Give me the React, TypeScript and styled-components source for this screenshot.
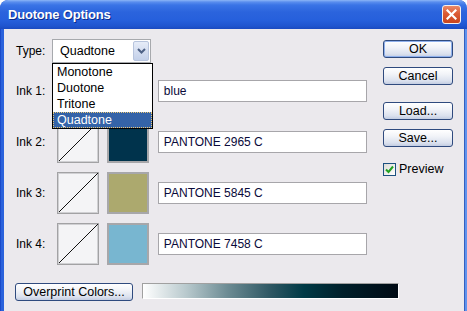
import React from "react";
import styled, { createGlobalStyle } from "styled-components";

const GlobalStyle = createGlobalStyle`
  html, body {
    margin: 0;
    padding: 0;
    background: #ffffff;
  }
  body {
    font-family: "Liberation Sans", Arial, sans-serif;
    font-size: 12px;
    color: #000;
  }
`;

const Window = styled.div`
  width: 467px;
  height: 311px;
  overflow: hidden;
  display: flex;
  flex-direction: column;
  border-radius: 8px 8px 0 0;
  background: linear-gradient(to right, #0b33b8 0px, #2a62dc 1px, #2a62dc 3px, #2a62dc 463px, #0c2a8c 464px, #5f93ee 465px);
`;

const TitleBar = styled.div`
  height: 29px;
  flex: none;
  display: flex;
  align-items: center;
  justify-content: space-between;
  padding: 0 6px 0 8px;
  border-radius: 8px 8px 0 0;
  background: linear-gradient(
    to bottom,
    #8cb6f7 0px,
    #5a8eee 2px,
    #3a74e6 5px,
    #2b64dd 12px,
    #2660dc 20px,
    #1f55cf 26px,
    #1a4ac0 29px
  );
`;

const Title = styled.span`
  color: #fff;
  font-weight: bold;
  font-size: 13px;
  letter-spacing: -0.2px;
  text-shadow: 1px 1px 0 #0b2a8a;
  margin-top: -1px;
`;

const CloseButton = styled.div`
  width: 17px;
  height: 17px;
  border: 1px solid #f4f1ee;
  border-radius: 3px;
  display: flex;
  align-items: center;
  justify-content: center;
  background: linear-gradient(to bottom, #e98a6a 0%, #dc5a33 45%, #c8451d 100%);
  margin-top: 0px;
`;

const Client = styled.div`
  flex: 1;
  margin: 0 3px 0 4px;
  background: #ebe9ed;
  display: flex;
  flex-direction: column;
  padding: 10px 0 0 11px;
`;

const TopSection = styled.div`
  display: flex;
`;

const LeftCol = styled.div`
  width: 352px;
  display: flex;
  flex-direction: column;
`;

const RightCol = styled.div`
  margin-left: 16px;
  padding-top: 1px;
  display: flex;
  flex-direction: column;
`;

const TypeRow = styled.div`
  height: 24px;
  display: flex;
  align-items: center;
`;

const Label = styled.span<{ $w: number }>`
  width: ${(p) => p.$w}px;
  flex: none;
  padding-left: 1px;
  color: #000;
`;

const SelectWrap = styled.div`
  position: relative;
  width: 99px;
  height: 24px;
`;

const SelectBox = styled.div`
  box-sizing: border-box;
  width: 99px;
  height: 24px;
  border: 1px solid #a7a9ad;
  background: #fff;
  display: flex;
  align-items: center;
  justify-content: space-between;
  padding: 0 1px 0 7px;
  font-size: 12.5px;
`;

const ArrowButton = styled.div`
  box-sizing: border-box;
  width: 16px;
  height: 20px;
  border: 1px solid #b7c4dd;
  border-radius: 2px;
  background: linear-gradient(to bottom, #e6ecf8, #c3d0e9);
  display: flex;
  align-items: center;
  justify-content: center;
`;

const DropList = styled.div`
  position: absolute;
  top: 24px;
  left: 0;
  width: 101px;
  box-sizing: border-box;
  border: 1px solid #000;
  background: #fff;
  z-index: 5;
`;

const DropItem = styled.div<{ $active?: boolean }>`
  height: 16px;
  line-height: 16px;
  padding-left: 4px;
  font-size: 12.5px;
  box-sizing: border-box;
  background: ${(p) => (p.$active ? "#3463a8" : "transparent")};
  color: ${(p) => (p.$active ? "#fff" : "#000")};
  outline: ${(p) => (p.$active ? "1px dotted #e9c777" : "none")};
  outline-offset: -1px;
`;

const InkList = styled.div`
  margin-top: 7px;
  display: flex;
  flex-direction: column;
  gap: 9px;
`;

const InkRow = styled.div`
  height: 42px;
  display: flex;
  align-items: center;
`;

const CurveBox = styled.div`
  box-sizing: border-box;
  width: 42px;
  height: 42px;
  border: 1px solid #a2a2a4;
  box-shadow: inset 0 0 0 1px #d0d0d3;
  background: #f4f4f6;
  display: flex;
`;

const Swatch = styled.div<{ $color: string }>`
  box-sizing: border-box;
  width: 42px;
  height: 42px;
  margin-left: 8px;
  border: 2px solid #a7a7aa;
  background: ${(p) => p.$color};
`;

const InkField = styled.div`
  box-sizing: border-box;
  width: 210px;
  height: 22px;
  margin-left: 9px;
  border: 1px solid #a7a6aa;
  background: #fff;
  display: flex;
  align-items: center;
  padding-left: 5px;
  color: #0a0a3a;
`;

const Button = styled.div<{ $default?: boolean; $w?: number }>`
  box-sizing: border-box;
  width: ${(p) => p.$w ?? 70}px;
  height: 18px;
  border: 1px solid #2f4a7e;
  border-radius: 3px;
  background: linear-gradient(to bottom, #ffffff 0%, #f1f3f8 40%, #dbe1ee 80%, #c3cde2 100%);
  box-shadow: ${(p) => (p.$default ? "inset 0 0 0 1px #8fb0ec" : "none")};
  display: flex;
  align-items: center;
  justify-content: center;
  color: #000;
  font-size: 12.5px;
`;

const ButtonGroup = styled.div`
  display: flex;
  flex-direction: column;
  gap: 9px;
  & + & {
    margin-top: 17px;
  }
`;

const CheckRow = styled.div`
  margin-top: 15px;
  display: flex;
  align-items: center;
  gap: 3px;
  font-size: 12.5px;
`;

const CheckBox = styled.div`
  box-sizing: border-box;
  width: 13px;
  height: 13px;
  border: 1px solid #1c5180;
  background: linear-gradient(135deg, #dcdcd6, #ffffff);
  display: flex;
  align-items: center;
  justify-content: center;
`;

const BottomRow = styled.div`
  margin-top: 18px;
  display: flex;
  align-items: flex-start;
  gap: 9px;
`;

const GradientBar = styled.div`
  box-sizing: border-box;
  width: 257px;
  height: 16px;
  border-top: 1px solid #a0a0a0;
  border-left: 1px solid #a0a0a0;
  border-right: 1px solid #ffffff;
  border-bottom: 1px solid #ffffff;
  background: linear-gradient(
    to right,
    #ffffff 0%,
    #b8c9cd 17%,
    #6d8c94 33%,
    #2e5763 50%,
    #003a46 63%,
    #00202b 78%,
    #000a14 100%
  );
`;

const inks = [
  { label: "Ink 1:", color: "#ffffff", name: "blue" },
  { label: "Ink 2:", color: "#00334c", name: "PANTONE 2965 C" },
  { label: "Ink 3:", color: "#aca96e", name: "PANTONE 5845 C" },
  { label: "Ink 4:", color: "#78b6d0", name: "PANTONE 7458 C" },
];

const types = ["Monotone", "Duotone", "Tritone", "Quadtone"];

function Curve() {
  return (
    <svg width="40" height="40" viewBox="0 0 40 40">
      <line x1="0.5" y1="39.5" x2="39.5" y2="0.5" stroke="#111" strokeWidth="1" shapeRendering="crispEdges" />
    </svg>
  );
}

function App() {
  return (
    <>
      <GlobalStyle />
      <Window>
        <TitleBar>
          <Title>Duotone Options</Title>
          <CloseButton>
            <svg width="11" height="11" viewBox="0 0 11 11">
              <path d="M1.5 1.5 L9.5 9.5 M9.5 1.5 L1.5 9.5" stroke="#fff" strokeWidth="2.2" strokeLinecap="square" />
            </svg>
          </CloseButton>
        </TitleBar>
        <Client>
          <TopSection>
            <LeftCol>
              <TypeRow>
                <Label $w={36}>Type:</Label>
                <SelectWrap>
                  <SelectBox>
                    Quadtone
                    <ArrowButton>
                      <svg width="9" height="6" viewBox="0 0 9 6">
                        <path d="M1 1 L4.5 4.5 L8 1" stroke="#4d6185" strokeWidth="2" fill="none" />
                      </svg>
                    </ArrowButton>
                  </SelectBox>
                  <DropList>
                    {types.map((t) => (
                      <DropItem key={t} $active={t === "Quadtone"}>
                        {t}
                      </DropItem>
                    ))}
                  </DropList>
                </SelectWrap>
              </TypeRow>
              <InkList>
                {inks.map((ink) => (
                  <InkRow key={ink.label}>
                    <Label $w={41}>{ink.label}</Label>
                    <CurveBox>
                      <Curve />
                    </CurveBox>
                    <Swatch $color={ink.color} />
                    <InkField>{ink.name}</InkField>
                  </InkRow>
                ))}
              </InkList>
            </LeftCol>
            <RightCol>
              <ButtonGroup>
                <Button $default>OK</Button>
                <Button>Cancel</Button>
              </ButtonGroup>
              <ButtonGroup>
                <Button>Load...</Button>
                <Button>Save...</Button>
              </ButtonGroup>
              <CheckRow>
                <CheckBox>
                  <svg width="9" height="9" viewBox="0 0 9 9">
                    <path d="M1 4.5 L3.5 7 L8 1.5" stroke="#21a121" strokeWidth="2" fill="none" />
                  </svg>
                </CheckBox>
                Preview
              </CheckRow>
            </RightCol>
          </TopSection>
          <BottomRow>
            <Button $w={118}>Overprint Colors...</Button>
            <GradientBar />
          </BottomRow>
        </Client>
      </Window>
    </>
  );
}

export default App;
